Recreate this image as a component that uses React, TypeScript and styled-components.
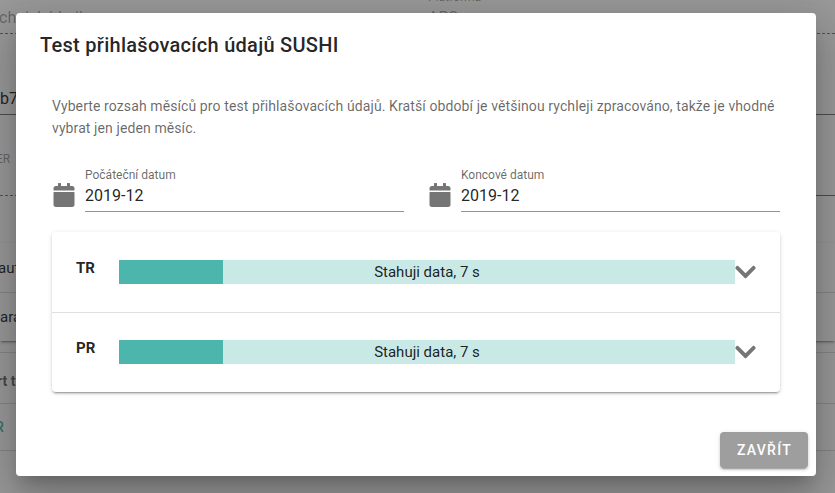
import React from "react";
import styled, { createGlobalStyle } from "styled-components";
import { FaCalendar, FaChevronDown } from "react-icons/fa";

const GlobalStyle = createGlobalStyle`
  *, *::before, *::after { box-sizing: border-box; }
  html, body, #root { height: 100%; }
  body {
    margin: 0;
    overflow: hidden;
    background: #fff;
    color: rgba(0, 0, 0, 0.87);
    font-family: Roboto, "Liberation Sans", sans-serif;
    font-size: 16px;
    line-height: 24px;
  }
`;

const Root = styled.div`
  position: relative;
  height: 493px;
  overflow: hidden;
`;

const Page = styled.div`
  display: flex;
  flex-direction: column;
  height: 100%;
`;

const FieldRow = styled.div<{ $height: number }>`
  display: flex;
  align-items: flex-end;
  flex: none;
  height: ${(p) => p.$height}px;
`;

const PageField = styled.div<{ $width?: number; $line: "dashed" | "solid"; $muted?: boolean; $shift?: number }>`
  display: flex;
  flex-direction: column;
  justify-content: flex-end;
  flex: ${(p) => (p.$width ? `0 0 ${p.$width}px` : "1")};
  height: 48px;
  padding-bottom: 3px;
  border-bottom: 1px ${(p) => p.$line} rgba(0, 0, 0, ${(p) => (p.$line === "dashed" ? 0.5 : 0.55)});
  color: rgba(0, 0, 0, ${(p) => (p.$muted ? 0.38 : 0.87)});
  text-indent: ${(p) => p.$shift ?? 0}px;
  white-space: nowrap;
`;

const PageLabel = styled.span`
  margin-bottom: 1px;
  font-size: 12px;
  line-height: 16px;
  color: rgba(0, 0, 0, 0.4);
`;

const Gap = styled.div<{ $size: number }>`
  flex: 0 0 ${(p) => p.$size}px;
`;

const PageCard = styled.div`
  flex: none;
  background: #fff;
  box-shadow: 0 3px 1px -2px rgba(0, 0, 0, 0.2), 0 2px 2px rgba(0, 0, 0, 0.14), 0 1px 5px rgba(0, 0, 0, 0.12);
`;

const PageRow = styled.div<{ $height: number; $divided?: boolean; $shift?: number }>`
  display: flex;
  align-items: center;
  height: ${(p) => p.$height}px;
  border-bottom: ${(p) => (p.$divided ? "1px solid rgba(0, 0, 0, 0.14)" : "none")};
  font-size: 15px;
  text-indent: ${(p) => p.$shift ?? 0}px;
`;

const PageTable = styled.div`
  flex: none;
  margin-top: 11px;
  border-top: 1px solid rgba(0, 0, 0, 0.14);
`;

const TableHead = styled.strong`
  padding-top: 6px;
  font-size: 14px;
  font-weight: 700;
  color: rgba(0, 0, 0, 0.6);
`;

const TableLink = styled.span`
  font-size: 14px;
  font-weight: 500;
  color: #4db6ac;
`;

const Scrim = styled.div`
  position: absolute;
  inset: 0;
  display: flex;
  align-items: flex-start;
  padding: 13px 19px 0 16px;
  background: rgba(33, 33, 33, 0.46);
`;

const Dialog = styled.section`
  display: flex;
  flex-direction: column;
  width: 800px;
  height: 463px;
  border-radius: 4px;
  background: #fff;
  box-shadow: 0 11px 15px -7px rgba(0, 0, 0, 0.2), 0 24px 38px 3px rgba(0, 0, 0, 0.14),
    0 9px 46px 8px rgba(0, 0, 0, 0.12);
`;

const Title = styled.h2`
  margin: 0;
  padding: 16px 24px 10px;
  font-size: 20px;
  line-height: 32px;
  font-weight: 500;
  letter-spacing: 0.28px;
`;

const Content = styled.div`
  flex: 1;
  padding: 24px 36px 0;
`;

const Intro = styled.p`
  margin: 0;
  font-size: 14px;
  line-height: 22px;
  letter-spacing: 0.1px;
  color: rgba(0, 0, 0, 0.6);
`;

const Dates = styled.div`
  display: grid;
  grid-template-columns: 1fr 1fr;
  column-gap: 24px;
  margin-top: 28px;
`;

const DateField = styled.label`
  display: flex;
  align-items: flex-end;
  height: 45px;
`;

const IconBox = styled.span`
  display: flex;
  justify-content: center;
  width: 24px;
  margin: 0 9px 5px 0;
  color: rgba(0, 0, 0, 0.54);
`;

const DateText = styled.span`
  display: flex;
  flex-direction: column;
  flex: 1;
  height: 45px;
  border-bottom: 1px solid rgba(0, 0, 0, 0.42);
`;

const DateLabel = styled.span`
  font-size: 12px;
  line-height: 16px;
  color: rgba(0, 0, 0, 0.6);
`;

const DateValue = styled.span`
  margin-top: 1px;
  font-size: 16px;
  line-height: 24px;
`;

const Panels = styled.div`
  margin-top: 20px;
  border-radius: 4px;
  box-shadow: 0 3px 1px -2px rgba(0, 0, 0, 0.2), 0 2px 2px rgba(0, 0, 0, 0.14), 0 1px 5px rgba(0, 0, 0, 0.12);
`;

const Panel = styled.div`
  display: flex;
  align-items: center;
  height: 80px;
  padding: 0 24px;

  & + & {
    padding-bottom: 1px;
    border-top: 1px solid rgba(0, 0, 0, 0.12);
  }
`;

const PanelName = styled.strong`
  width: 43px;
  margin-top: -8px;
  font-size: 15px;
  font-weight: 700;
`;

const Progress = styled.div`
  display: flex;
  align-items: center;
  justify-content: center;
  width: 616px;
  height: 24px;
  font-size: 15px;
  background: linear-gradient(to right, #4db6ac 104px, #c9e9e6 104px);
`;

const Chevron = styled(FaChevronDown)`
  flex: none;
  width: 21px;
  height: 24px;
  color: rgba(0, 0, 0, 0.54);
`;

const Actions = styled.footer`
  display: flex;
  justify-content: flex-end;
  padding: 8px;
`;

const CloseButton = styled.button`
  width: 88px;
  height: 36px;
  padding: 0 0 0 1px;
  border: 0;
  border-radius: 4px;
  background: #9e9e9e;
  color: #fff;
  font: 500 14px Roboto, sans-serif;
  letter-spacing: 1.25px;
  text-transform: uppercase;
  box-shadow: 0 3px 1px -2px rgba(0, 0, 0, 0.2), 0 2px 2px rgba(0, 0, 0, 0.14), 0 1px 5px rgba(0, 0, 0, 0.12);
`;

const dates = [
  { label: "Počáteční datum", value: "2019-12" },
  { label: "Koncové datum", value: "2019-12" },
];

const reports = ["TR", "PR"];

export default function App() {
  return (
    <Root>
      <GlobalStyle />
      <Page>
        <FieldRow $height={34}>
          <PageField $width={404} $line="dashed" $muted $shift={-1}>chnická knihovna</PageField>
          <Gap $size={24} />
          <PageField $line="dashed" $muted>
            <PageLabel>Platforma</PageLabel>
            APS
          </PageField>
        </FieldRow>
        <FieldRow $height={81}>
          <PageField $line="solid">b7</PageField>
        </FieldRow>
        <FieldRow $height={81}>
          <PageField $width={404} $line="dashed" $shift={-4}>
            <PageLabel>ER</PageLabel>
            &nbsp;
          </PageField>
          <PageField $line="solid" />
        </FieldRow>
        <Gap $size={47} />
        <PageCard>
          <PageRow $height={50} $divided $shift={-2}>aut</PageRow>
          <PageRow $height={48}>ara</PageRow>
        </PageCard>
        <PageTable>
          <PageRow $height={51} $divided $shift={-3}><TableHead>rt typ</TableHead></PageRow>
          <PageRow $height={47} $divided $shift={-5}><TableLink>R</TableLink></PageRow>
        </PageTable>
      </Page>
      <Scrim>
        <Dialog>
          <Title>Test přihlašovacích údajů SUSHI</Title>
          <Content>
            <Intro>
              Vyberte rozsah měsíců pro test přihlašovacích údajů. Kratší období je většinou rychleji
              zpracováno, takže je vhodné vybrat jen jeden měsíc.
            </Intro>
            <Dates>
              {dates.map((d) => (
                <DateField key={d.label}>
                  <IconBox><FaCalendar size={24} /></IconBox>
                  <DateText>
                    <DateLabel>{d.label}</DateLabel>
                    <DateValue>{d.value}</DateValue>
                  </DateText>
                </DateField>
              ))}
            </Dates>
            <Panels>
              {reports.map((name) => (
                <Panel key={name}>
                  <PanelName>{name}</PanelName>
                  <Progress>Stahuji data, 7 s</Progress>
                  <Chevron />
                </Panel>
              ))}
            </Panels>
          </Content>
          <Actions>
            <CloseButton>Zavřít</CloseButton>
          </Actions>
        </Dialog>
      </Scrim>
    </Root>
  );
}
